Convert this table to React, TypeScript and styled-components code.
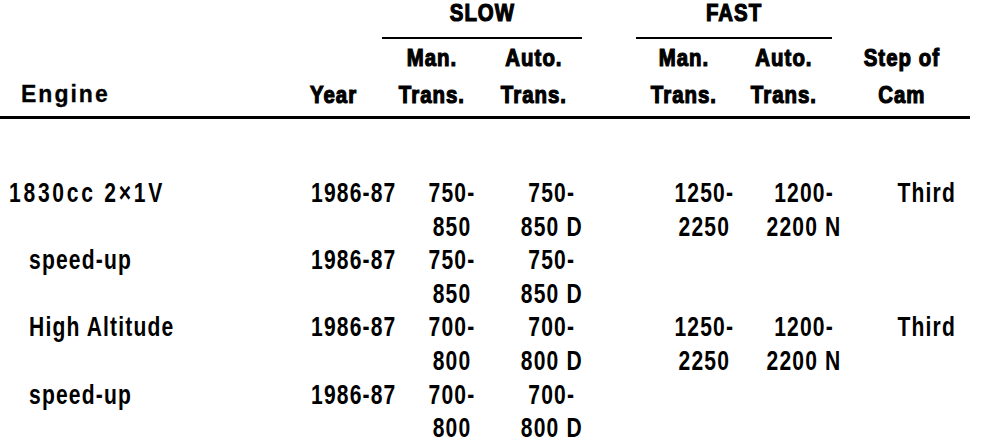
import React from "react";
import styled, { createGlobalStyle } from "styled-components";

const Global = createGlobalStyle`
  html, body { margin: 0; padding: 0; background: #fff; }
  body {
    color: #000;
    font-family: "Liberation Sans", Arial, sans-serif;
  }
`;

const Page = styled.div`
  width: 992px;
  height: 440px;
  overflow: hidden;
  background: #fff;
`;

/* condensed lettering: the typeface of the scan is a condensed grotesque */
const Squeeze = styled.span<{ $origin?: "left" | "center" | "right"; $sx?: number }>`
  display: inline-block;
  white-space: pre;
  transform: scaleX(${(p) => p.$sx ?? 0.78});
  transform-origin: ${(p) => p.$origin ?? "center"} center;
`;

const Head = styled.div`
  display: grid;
  grid-template-columns: 300px 80px 104px 100px 50px 100px 100px 136px;
  grid-template-rows: 39px 37px 37px;
  width: 970px;
  padding-bottom: 3px;
  border-bottom: 3px solid #000;
  font-weight: 700;
  font-size: 24px;
  letter-spacing: 1.2px;
  -webkit-text-stroke: 1.2px #000;
`;

const Group = styled.div<{ $col: number }>`
  grid-row: 1;
  grid-column: ${(p) => p.$col} / span 2;
  display: flex;
  justify-content: center;
  margin: 0 2px;
  height: 37px;
  border-bottom: 2px solid #000;
  line-height: 26px;
`;

const Label = styled.div<{ $col: number; $left?: boolean }>`
  grid-row: 2 / span 2;
  grid-column: ${(p) => p.$col};
  align-self: end;
  display: flex;
  justify-content: ${(p) => (p.$left ? "flex-start" : "center")};
  padding-left: ${(p) => (p.$left ? "10px" : "0")};
  line-height: 37px;
  text-align: center;
`;

const EngineLabel = styled.div`
  grid-row: 2 / span 2;
  grid-column: 1;
  align-self: end;
  padding-left: 21px;
  line-height: 37px;
  font-size: 23px;
  letter-spacing: 2px;
  -webkit-text-stroke: 0.3px #000;
`;

const Body = styled.div`
  margin-top: 58px;
  font-weight: 700;
  font-size: 27px;
  line-height: 33.6px;
  letter-spacing: 1.5px;
`;

const Row = styled.div`
  display: grid;
  grid-template-columns: 305px 100px 95px 104px 50px 100px 100px 102px;
  height: 67.2px;
`;

const Name = styled.div<{ $sub?: boolean; $wide?: boolean }>`
  grid-column: 1;
  padding-left: ${(p) => (p.$sub ? "29px" : "9px")};
  letter-spacing: ${(p) => (p.$wide ? "3.5px" : "1.5px")};
`;

const Year = styled.div`
  grid-column: 2;
  padding-left: 6px;
`;

const Value = styled.div<{ $col: number }>`
  grid-column: ${(p) => p.$col};
  display: flex;
  justify-content: center;
  text-align: center;
`;

const Cam = styled.div`
  grid-column: 8;
  display: flex;
  justify-content: flex-end;
`;

type Item = {
  name: string;
  sub?: boolean;
  year: string;
  sm: string;
  sa: string;
  fm?: string;
  fa?: string;
  cam?: string;
};

const rows: Item[] = [
  { name: "1830cc 2×1V", year: "1986-87", sm: "750-\n850", sa: "750-\n850 D", fm: "1250-\n2250", fa: "1200-\n2200 N", cam: "Third" },
  { name: "speed-up", sub: true, year: "1986-87", sm: "750-\n850", sa: "750-\n850 D" },
  { name: "High Altitude", sub: true, year: "1986-87", sm: "700-\n800", sa: "700-\n800 D", fm: "1250-\n2250", fa: "1200-\n2200 N", cam: "Third" },
  { name: "speed-up", sub: true, year: "1986-87", sm: "700-\n800", sa: "700-\n800 D" },
];

const HS = 0.85;

export default function App() {
  return (
    <Page>
      <Global />
      <Head>
        <Group $col={3}><Squeeze $sx={HS}>SLOW</Squeeze></Group>
        <Group $col={6}><Squeeze $sx={HS}>FAST</Squeeze></Group>
        <EngineLabel>Engine</EngineLabel>
        <Label $col={2} $left><Squeeze $sx={HS} $origin="left">Year</Squeeze></Label>
        <Label $col={3}><Squeeze $sx={HS}>{"Man.\nTrans."}</Squeeze></Label>
        <Label $col={4}><Squeeze $sx={HS}>{"Auto.\nTrans."}</Squeeze></Label>
        <Label $col={6}><Squeeze $sx={HS}>{"Man.\nTrans."}</Squeeze></Label>
        <Label $col={7}><Squeeze $sx={HS}>{"Auto.\nTrans."}</Squeeze></Label>
        <Label $col={8}><Squeeze $sx={HS}>{"Step of\nCam"}</Squeeze></Label>
      </Head>
      <Body>
        {rows.map((r, i) => (
          <Row key={i}>
            <Name $sub={r.sub} $wide={!r.sub}><Squeeze $origin="left">{r.name}</Squeeze></Name>
            <Year><Squeeze $origin="left">{r.year}</Squeeze></Year>
            <Value $col={3}><Squeeze>{r.sm}</Squeeze></Value>
            <Value $col={4}><Squeeze>{r.sa}</Squeeze></Value>
            {r.fm && <Value $col={6}><Squeeze>{r.fm}</Squeeze></Value>}
            {r.fa && <Value $col={7}><Squeeze>{r.fa}</Squeeze></Value>}
            {r.cam && <Cam><Squeeze $origin="right">{r.cam}</Squeeze></Cam>}
          </Row>
        ))}
      </Body>
    </Page>
  );
}
